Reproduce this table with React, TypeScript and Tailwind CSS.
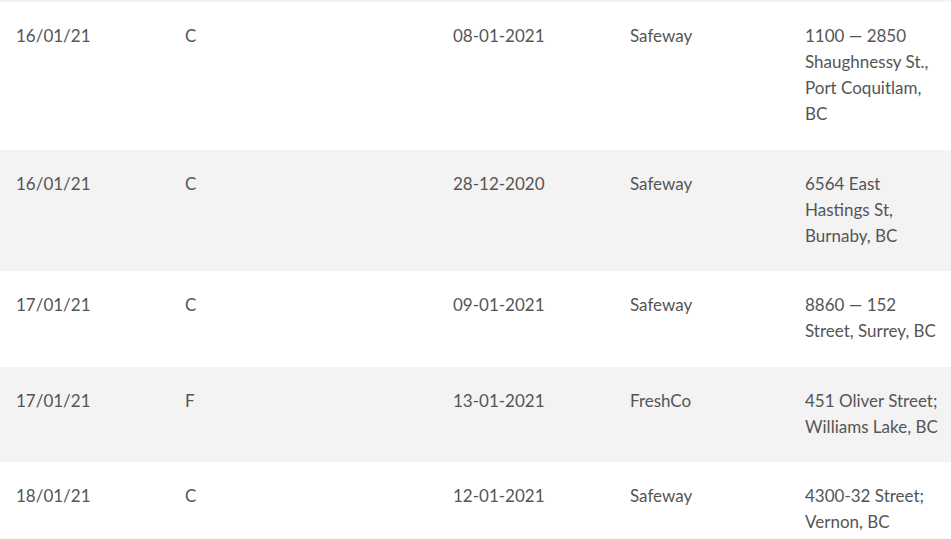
import React from 'react';

type Row = {
  date: string;
  code: string;
  visited: string;
  store: string;
  address: string;
};

const rows: Row[] = [
  { date: '16/01/21', code: 'C', visited: '08-01-2021', store: 'Safeway', address: '1100 — 2850 Shaughnessy St., Port Coquitlam, BC' },
  { date: '16/01/21', code: 'C', visited: '28-12-2020', store: 'Safeway', address: '6564 East Hastings St, Burnaby, BC' },
  { date: '17/01/21', code: 'C', visited: '09-01-2021', store: 'Safeway', address: '8860 — 152 Street, Surrey, BC' },
  { date: '17/01/21', code: 'F', visited: '13-01-2021', store: 'FreshCo', address: '451 Oliver Street; Williams Lake, BC' },
  { date: '18/01/21', code: 'C', visited: '12-01-2021', store: 'Safeway', address: '4300-32 Street; Vernon, BC' },
];

export default function App() {
  return (
    <div className="min-h-[539px] w-[951px] overflow-hidden bg-white font-['Lato','Liberation_Sans',sans-serif] text-[17px] leading-[26px] text-[#555]">
      <div className="h-[2px] bg-[#f3f3f3]" />
      {rows.map((row, i) => (
        <div
          key={i}
          className={`grid grid-cols-[169px_268px_177px_175px_1fr] pt-[21px] pb-[22.5px] ${i % 2 === 1 ? 'bg-[#f3f3f3]' : 'bg-white'}`}
        >
          <div className="pl-4">{row.date}</div>
          <div className="pl-4">{row.code}</div>
          <div className="pl-4">{row.visited}</div>
          <div className="pl-4">{row.store}</div>
          <div className="pl-4 pr-[8px]">{row.address}</div>
        </div>
      ))}
    </div>
  );
}
